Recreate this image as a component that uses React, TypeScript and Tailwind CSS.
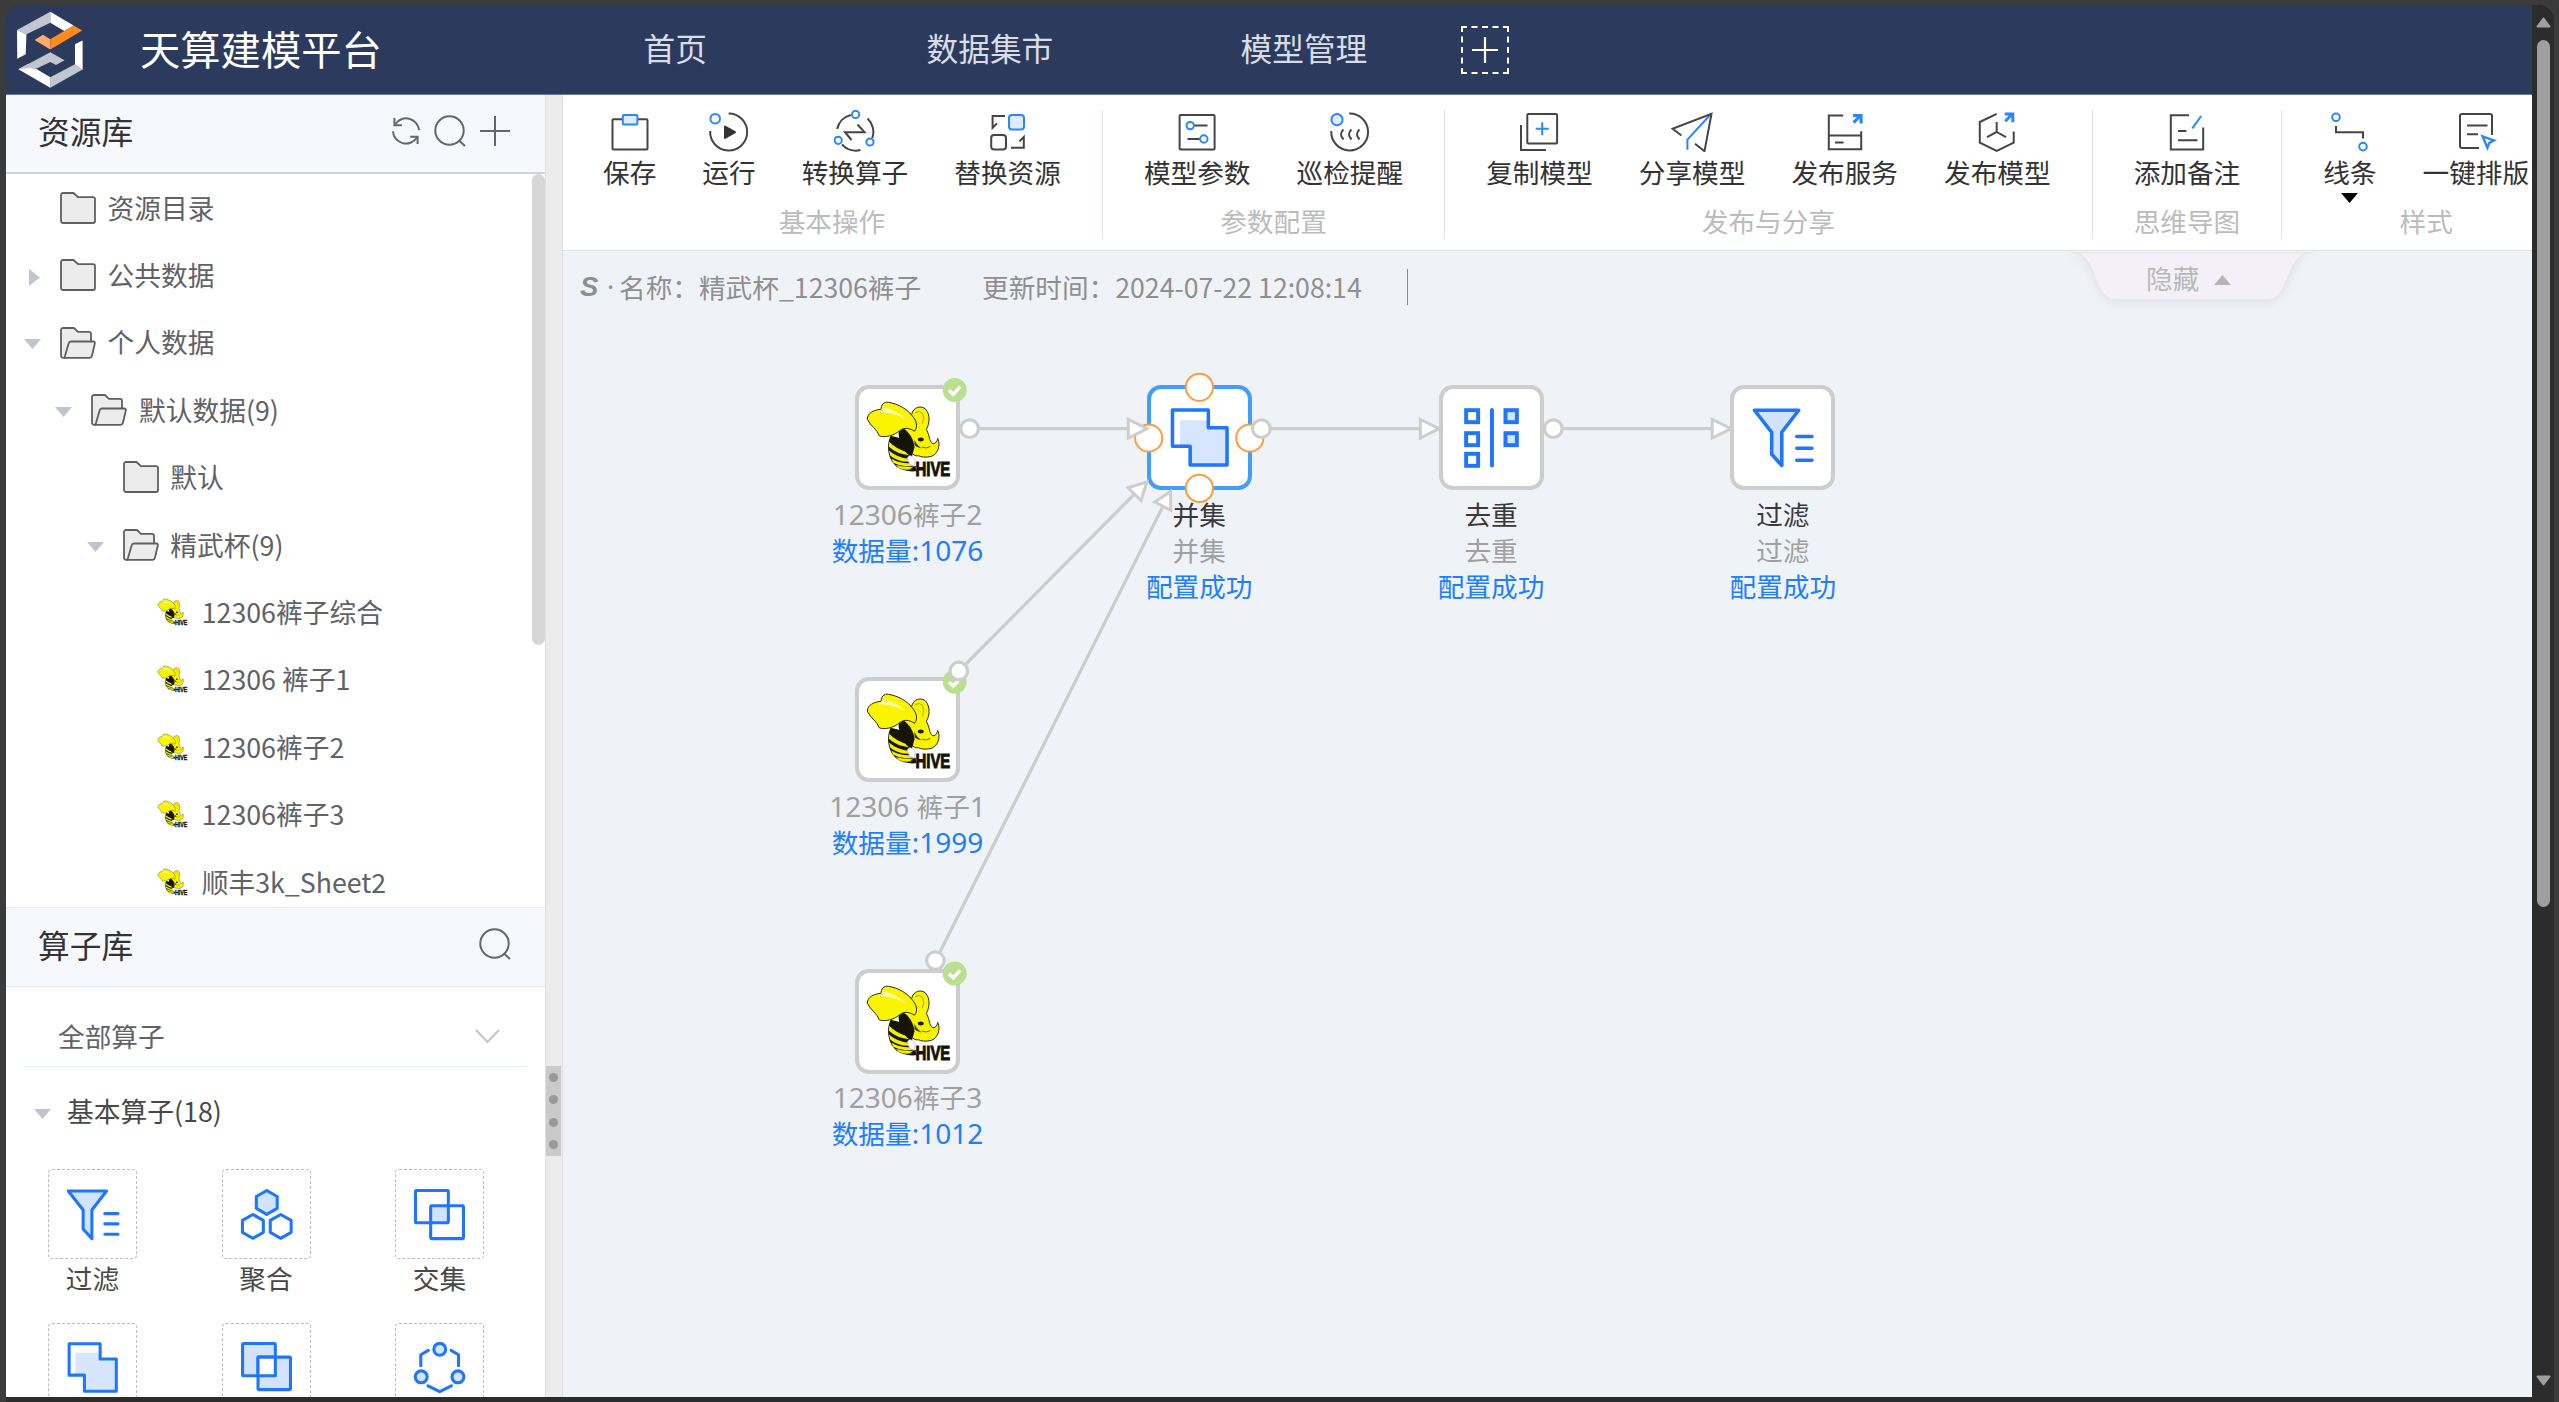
import React from 'react';

/* ---------- shared drawing pieces ---------- */

const DARK = '#454545';
const BLUE = '#2b85ff';
const PALE = '#dfebff';

function HiveIcon({ className }: { className?: string }) {
  return (
    <svg viewBox="135 120 262 235" overflow="visible" className={className}>
      {/* striped abdomen */}
      <path d="M212 228C196 262 206 312 242 328C262 336 280 336 292 334L270 300L262 240Z" fill="#151505" />
      <path d="M208 246q22 24 58 32l4 9q-40-4-63-26z" fill="#f4ee00" />
      <path d="M207 272q26 22 62 26l4 8q-38 2-62-18z" fill="#f4ee00" />
      <path d="M214 296q26 16 60 14l4 7q-30 8-58-8z" fill="#f4ee00" />
      <path d="M228 316q24 8 52 4l4 6q-22 8-46 0z" fill="#f4ee00" />
      {/* head and trunk */}
      <path
        d="M275 165C280 140 305 135 318 148C332 165 330 190 320 208L327 225C330 240 334 250 340 252C350 250 352 244 354 236C364 256 354 284 334 290C318 294 304 292 296 288C280 292 262 270 250 234L238 214Z"
        fill="#fbf400" stroke="#2a2a10" strokeWidth="3" strokeLinejoin="round"
      />
      <path d="M250 205C268 216 282 238 284 262L276 292C254 282 236 246 236 218Z" fill="#151505" />
      <path d="M284 240q8 18 22 26q-14-2-22-10z" fill="#3b3806" />
      {/* wings and ear */}
      <path
        d="M142 178C142 160 160 150 184 148C182 136 192 124 206 127C236 132 262 148 276 166C292 184 294 202 284 214C268 204 254 202 240 212C222 228 194 234 178 228C172 208 152 200 142 178Z"
        fill="#fbf400" stroke="#2a2a10" strokeWidth="3" strokeLinejoin="round"
      />
      <path d="M188 142q40 6 70 36q-40-24-80-20z" fill="#fdfaa8" />
      <path d="M286 158q14-8 22 2q8 14 0 32" fill="none" stroke="#a9a200" strokeWidth="3" />
      <ellipse cx="303" cy="239" rx="9" ry="6" fill="#1c1c08" />
      <path d="M306 262q14 6 26-2" fill="none" stroke="#6d6800" strokeWidth="3" />
      <path d="M262 296q4-12 16-6l8 10-2 20-14-6z" fill="#fff" stroke="#bbb" strokeWidth="2" />
      <path d="M272 326l16-8v16z" fill="#151505" />
      <text
        x="287" y="348" fontSize="62" fontWeight="700" fontFamily="'Liberation Sans', Arial, sans-serif"
        textLength="105" lengthAdjust="spacingAndGlyphs" fill="#131306" stroke="#131306" strokeWidth="3"
      >
        HIVE
      </text>
    </svg>
  );
}

type OpKind = 'filter' | 'aggregate' | 'intersect' | 'union' | 'difference' | 'ring' | 'dedupe';

const hexPath = (cx: number, cy: number) =>
  `M${cx} ${cy - 14}l12.3 7v14l-12.3 7l-12.3-7v-14z`;

function OpIcon({ kind, className }: { kind: OpKind; className?: string }) {
  return (
    <svg
      viewBox="0 0 60 60" className={className} overflow="visible"
      fill="none" stroke="#1f76fa" strokeWidth="3.6" strokeLinejoin="round" strokeLinecap="round"
    >
      {kind === 'filter' && (
        <>
          <path d="M1.5 2.3H46.5L29.3 24.7V58.5L19 47V24.7z" fill="#d2e3fd" />
          <path d="M44.5 29H60M44.5 41H60M44.5 53.2H60" />
        </>
      )}
      {kind === 'aggregate' && (
        <>
          <path d={hexPath(30.3, 15.8)} fill="#d2e3fd" />
          <path d={hexPath(14, 44)} />
          <path d={hexPath(46.7, 44)} />
        </>
      )}
      {kind === 'intersect' && (
        <>
          <path d="M19 19.5H40V40H19z" fill="#d2e3fd" stroke="none" />
          <rect x="1.8" y="1.8" width="38.6" height="38" rx="1" />
          <rect x="19.6" y="19.8" width="38.6" height="38.6" rx="1" />
        </>
      )}
      {kind === 'union' && (
        <>
          <path d="M10 12.5H39V21H57V58H20V39H10z" fill="#d6e6fe" stroke="none" />
          <path d="M2.5 2H39V20H58V58H20.5V39H2.5z" />
        </>
      )}
      {kind === 'difference' && (
        <>
          <rect x="1.8" y="1.8" width="38.6" height="38" rx="1" fill="#d2e3fd" />
          <rect x="20" y="17.8" width="38.2" height="38.2" rx="1" fill="#d2e3fd" />
          <path d="M20 17.8H40.4V39.8H20z" fill="#fff" />
        </>
      )}
      {kind === 'ring' && (
        <>
          <circle cx="30.3" cy="8.6" r="7" fill="#d2e3fd" />
          <circle cx="8.5" cy="41" r="7" fill="#d2e3fd" />
          <circle cx="51.7" cy="41" r="7" fill="#d2e3fd" />
          <path d="M16.8 9.8L8 15V28M43.6 9.8L52.4 15V28M16.5 51.5L30.3 58.5L44 51.5" />
        </>
      )}
      {kind === 'dedupe' && (
        <g strokeWidth="4" strokeLinejoin="miter">
          <rect x="4.2" y="2.2" width="12.2" height="12.2" />
          <rect x="4.2" y="25.6" width="12.2" height="12.2" />
          <rect x="4.2" y="46.6" width="12.2" height="12.2" />
          <path d="M30.5 2V58.5" />
          <rect x="44.2" y="2.2" width="11.6" height="12.2" fill="#d2e3fd" />
          <rect x="44.2" y="25.6" width="11.6" height="12.2" fill="#d2e3fd" />
        </g>
      )}
    </svg>
  );
}

/* ---------- header ---------- */

function Logo() {
  return (
    <svg viewBox="16 11 68 78" className="h-[78px] w-[68px]">
      <path d="M50.3 11.7L17 30L26.4 34.3L50.3 22.7z" fill="#c1c6d0" />
      <path d="M50.3 11.7L73.6 25.5L64.3 31L50.3 22.7z" fill="#fff" />
      <path d="M17 30L26.4 34.3L25.7 54.3L17.3 58.7z" fill="#fff" />
      <path d="M34.6 40L42.9 34.7L50.3 39.3V49.5z" fill="#ffab6b" />
      <path d="M50.3 49.5V39.3L73.6 25.5L82.2 30.5z" fill="#ff8b20" />
      <path d="M82.6 40.5V70L75 64.5V44.3z" fill="#fff" />
      <path d="M82.6 69.5L50.3 87.7V77.3L75 64.3z" fill="#c1c6d0" />
      <path d="M18.4 69.2L28 64L50.3 77.3V87.7z" fill="#fff" />
      <path d="M18.4 69.2L50.3 52.3L64.5 60.3L56 65L50.3 62L34.5 69.5L31 68z" fill="#c1c6d0" />
    </svg>
  );
}

function Header() {
  return (
    <header className="flex h-[90px] shrink-0 items-center border-b border-[#6f7a9a] bg-[#2c3b5d]">
      <div className="flex w-[134px] items-center pl-[10px]">
        <Logo />
      </div>
      <div className="-mt-[3px] w-[503.5px] text-[40.3px] leading-[84px] text-white">天算建模平台</div>
      <nav className="flex items-center text-[31.7px] leading-[84px] text-[#d9dde6]">
        <span className="-mt-[6px] w-[283px]">首页</span>
        <span className="-mt-[6px] w-[314px]">数据集市</span>
        <span className="-mt-[6px] w-[220.5px]">模型管理</span>
      </nav>
      <button className="flex size-[48px] items-center justify-center border-2 border-dashed border-white">
        <svg viewBox="0 0 28 28" className="size-7" stroke="#fff" strokeWidth="2.2">
          <path d="M14 1V27M1 14H27" />
        </svg>
      </button>
    </header>
  );
}

/* ---------- sidebar ---------- */

function SearchIcon() {
  return (
    <svg viewBox="0 0 32 32" className="size-8" fill="none" stroke="#666" strokeWidth="2">
      <circle cx="15.5" cy="15.5" r="14.2" />
      <path d="M25 25.5L31 31" />
    </svg>
  );
}

function RefreshIcon() {
  return (
    <svg viewBox="0 0 28 28" className="size-7" fill="none" stroke="#666" strokeWidth="2">
      <path d="M3.2 7.2A13 13 0 0 1 27 13.2" />
      <path d="M2.4 1V8.3H9.8" />
      <path d="M24.8 20.8A13 13 0 0 1 1 14.2" />
      <path d="M18.2 19.8H25.6V27" />
    </svg>
  );
}

function FolderClosed() {
  return (
    <svg viewBox="0 0 36 32" className="h-8 w-9" fill="#ececec" stroke="#5f5f5f" strokeWidth="1.8">
      <path d="M3 1H13.5L18 5.2H33a2 2 0 0 1 2 2V29a2 2 0 0 1-2 2H3a2 2 0 0 1-2-2V3a2 2 0 0 1 2-2z" />
    </svg>
  );
}

function FolderOpen() {
  return (
    <svg viewBox="0 0 36 32" className="mt-px h-8 w-9" fill="#ececec" stroke="#5f5f5f" strokeWidth="1.8" strokeLinejoin="round">
      <path d="M5 30.8H3a2 2 0 0 1-2-2V3a2 2 0 0 1 2-2H14L18 4.8H29a2 2 0 0 1 2 2V15" />
      <path d="M11 14.5H33.3q2 0 1.5 2L32 28.8q-.5 2-2.5 2H4.5L8.6 16.5q.5-2 2.4-2z" />
    </svg>
  );
}

function Caret({ open }: { open: boolean }) {
  return open ? (
    <svg viewBox="0 0 17 10" className="h-[10px] w-[17px]">
      <path d="M0 0H17L8.5 10z" fill="#c0c4cc" />
    </svg>
  ) : (
    <svg viewBox="0 0 11 17" className="ml-[5px] h-[17px] w-[11px]">
      <path d="M0 0L11 8.5L0 17z" fill="#c0c4cc" />
    </svg>
  );
}

type TreeNode = { label: string; depth: number; kind: 'closed' | 'open' | 'hive'; caret?: 'open' | 'shut' };

const tree: TreeNode[] = [
  { label: '资源目录', depth: 0, kind: 'closed' },
  { label: '公共数据', depth: 0, kind: 'closed', caret: 'shut' },
  { label: '个人数据', depth: 0, kind: 'open', caret: 'open' },
  { label: '默认数据(9)', depth: 1, kind: 'open', caret: 'open' },
  { label: '默认', depth: 2, kind: 'closed' },
  { label: '精武杯(9)', depth: 2, kind: 'open', caret: 'open' },
  { label: '12306裤子综合', depth: 3, kind: 'hive' },
  { label: '12306 裤子1', depth: 3, kind: 'hive' },
  { label: '12306裤子2', depth: 3, kind: 'hive' },
  { label: '12306裤子3', depth: 3, kind: 'hive' },
  { label: '顺丰3k_Sheet2', depth: 3, kind: 'hive' },
];

function TreeRow({ node }: { node: TreeNode }) {
  return (
    <li
      className="flex h-[67.4px] shrink-0 items-center text-[26.75px] whitespace-nowrap text-[#606266]"
      style={{ paddingLeft: node.depth * 31.4 }}
    >
      <span className="flex w-[54px] shrink-0 items-center pt-1 pl-[18px]">
        {node.caret && <Caret open={node.caret === 'open'} />}
      </span>
      {node.kind === 'closed' && <FolderClosed />}
      {node.kind === 'open' && <FolderOpen />}
      {node.kind === 'hive' && <HiveIcon className="ml-[3px] h-[28px] w-[31px]" />}
      <span className={node.kind === 'hive' ? 'ml-[13.5px]' : 'ml-[11.5px]'}>{node.label}</span>
    </li>
  );
}

const operators: { label: string; kind: OpKind }[] = [
  { label: '过滤', kind: 'filter' },
  { label: '聚合', kind: 'aggregate' },
  { label: '交集', kind: 'intersect' },
  { label: '并集', kind: 'union' },
  { label: '差集', kind: 'difference' },
  { label: '关联', kind: 'ring' },
];

function Sidebar() {
  return (
    <aside className="flex w-[539px] shrink-0 flex-col overflow-hidden bg-white">
      <div className="flex h-[79px] shrink-0 items-center border-b-2 border-[#cfd3dc] bg-[#f6f8fe] pr-[35px] pb-[5px] pl-[32px]">
        <h2 className="-mt-[2px] flex-1 text-[31.7px] leading-[60px] text-[#333]">资源库</h2>
        <div className="flex items-center">
          <RefreshIcon />
          <span className="ml-[14px]"><SearchIcon /></span>
          <svg viewBox="0 0 30 30" className="ml-[14px] size-[30px]" stroke="#666" strokeWidth="2">
            <path d="M15 0V30M0 15H30" />
          </svg>
        </div>
      </div>

      <div className="flex h-[733px] shrink-0 overflow-hidden">
        <ul className="flex flex-1 flex-col">
          {tree.map((n) => (
            <TreeRow key={n.label} node={n} />
          ))}
        </ul>
        <div className="h-[471px] w-[13.5px] rounded-full bg-[#d7d7d7]" />
      </div>

      <div className="flex h-[80px] shrink-0 items-center border-y-[1.5px] border-[#e6edf8] bg-[#f6f8fe] pr-[34px] pb-[6px] pl-[32px]">
        <h2 className="-mt-[1px] flex-1 text-[31.7px] leading-[60px] text-[#333]">算子库</h2>
        <SearchIcon />
      </div>

      <div className="mx-[18px] mt-[18px] flex h-[62px] shrink-0 items-center justify-between border-b-[1.5px] border-[#e1f0fd] pr-[27px] pl-[34px] text-[26.67px] text-[#606266]">
        <span>全部算子</span>
        <svg viewBox="0 0 25 14" className="h-[14px] w-[25px]" fill="none" stroke="#c0c4cc" strokeWidth="2">
          <path d="M1 1L12.5 13L24 1" />
        </svg>
      </div>

      <div className="mb-[13px] flex h-[89px] shrink-0 items-center pl-[27.5px] text-[26.75px] text-[#484848]">
        <span className="pt-1"><Caret open /></span>
        <span className="ml-[16.5px]">基本算子(18)</span>
      </div>

      <div className="grid shrink-0 grid-cols-[89px_89px_89px] gap-x-[84.5px] gap-y-[26.5px] pl-[42px]">
        {operators.map((op) => (
          <div key={op.kind} className="flex flex-col items-center">
            <div className="flex h-[90px] w-[89px] items-center justify-center rounded-[4px] border-[1.5px] border-dashed border-[#bdbdbd]">
              <OpIcon kind={op.kind} className="size-[51px]" />
            </div>
            <span className="text-[26.67px] leading-[37px] text-[#484848]">{op.label}</span>
          </div>
        ))}
      </div>
    </aside>
  );
}

function Splitter() {
  return (
    <div className="flex w-[18px] shrink-0 flex-col items-center border-x-[1.5px] border-x-[#dfe0e4] bg-[#ececec]">
      <div className="mt-[971px] -ml-px flex h-[90px] w-[15px] shrink-0 flex-col items-center justify-around bg-[#cacaca]">
        <i className="size-[9px] rounded-full bg-[#999]" />
        <i className="size-[9px] rounded-full bg-[#999]" />
        <i className="size-[9px] rounded-full bg-[#999]" />
        <i className="size-[9px] rounded-full bg-[#999]" />
      </div>
    </div>
  );
}

/* ---------- toolbar ---------- */

const arrowUpRight = (x: number, y: number) =>
  `M${x} ${y}L${x + 7.5} ${y - 7.5}M${x - 0.5} ${y - 7.2}H${x + 7.6}V${y + 1}`;

const icons: Record<string, React.ReactNode> = {
  save: (
    <>
      <rect x="3.5" y="9.3" width="35" height="30.2" rx="1" />
      <rect x="13.8" y="5" width="14.6" height="9.6" rx="1" stroke={BLUE} fill={PALE} />
    </>
  ),
  run: (
    <>
      <path d="M20.6 3.5A18.5 18.5 0 1 1 2.2 21" />
      <circle cx="7.2" cy="8.7" r="4.8" stroke={BLUE} />
      <path d="M17 16.5V28L27 22.2z" fill="#333" stroke="#333" strokeLinejoin="round" />
    </>
  ),
  convert: (
    <>
      <path d="M16.8 5A18.3 18.3 0 0 0 3.2 19M33.5 8.5A18.3 18.3 0 0 1 38.3 28M8 34.5A18.3 18.3 0 0 0 26.5 40" />
      <path d="M23.5 14.5L30.5 22.2H11L17.5 30" />
      <g stroke={BLUE} fill="#fff">
        <circle cx="21.6" cy="4.4" r="3.6" />
        <circle cx="4.2" cy="30.3" r="3.6" />
        <circle cx="36" cy="32" r="3.6" />
      </g>
    </>
  ),
  replace: (
    <>
      <rect x="22" y="5" width="15" height="14.6" rx="3" stroke={BLUE} fill={PALE} />
      <rect x="4.2" y="25" width="14.8" height="14.4" rx="3" />
      <path d="M18 6H5.6V17.8L10 13.4M24 37.8H36.8V27L32.4 31.4" />
    </>
  ),
  params: (
    <>
      <rect x="3.6" y="5" width="35" height="34.6" rx="1" />
      <path d="M18 15.5H31.5M11.5 29H24" />
      <circle cx="14.2" cy="15.6" r="3.7" stroke={BLUE} />
      <circle cx="27.8" cy="29" r="3.7" stroke={BLUE} />
    </>
  ),
  patrol: (
    <>
      <path d="M20.2 3.6A18.4 18.4 0 1 1 2.3 21" />
      <circle cx="8" cy="9.7" r="5.6" stroke={BLUE} fill={PALE} />
      <path d="M14.5 19.5Q9.5 24 14.5 29.5M22.5 19.5Q17.5 24 22.5 29.5M30.5 19.5Q25.5 24 30.5 29.5" />
    </>
  ),
  copy: (
    <>
      <rect x="9.3" y="4" width="29.8" height="29.5" rx="1" />
      <path d="M3 15V40H28" />
      <path d="M24.2 12.2V25.2M17.7 18.7H30.7" stroke={BLUE} />
    </>
  ),
  share: (
    <>
      <path d="M40 4L16.4 29.6V39.8" stroke={BLUE} />
      <path d="M10.5 25.5L1.5 18.7L40.5 3.8L33.5 41.2L24 33.8" />
    </>
  ),
  service: (
    <>
      <path d="M19.2 5.4H4.8V39.2H37.2V21.3M4.8 25.4H37.2M11 32.6H19.6" />
      <path d={arrowUpRight(29.5, 12.6)} stroke={BLUE} strokeWidth="3" />
    </>
  ),
  publish: (
    <>
      <path d="M20.7 3.8L3.8 12V32.6L20.7 40.8L37.7 32.6V21.6" />
      <path d="M20.7 12V22L11 27.2M20.7 22L30 27.2" />
      <path d={arrowUpRight(29.2, 11.2)} stroke={BLUE} strokeWidth="3" />
    </>
  ),
  note: (
    <>
      <path d="M23 5.2H4.8V39.4H37.2V17.6M12 21H20.5M12 30.2H31.5" />
      <path d="M35.2 6L26.3 18.4" stroke={BLUE} />
    </>
  ),
  line: (
    <>
      <path d="M7 16V22.3H34V28.5" />
      <circle cx="7" cy="7.3" r="3.8" stroke={BLUE} />
      <circle cx="34" cy="36.6" r="3.8" stroke={BLUE} />
    </>
  ),
  arrange: (
    <>
      <path d="M24 38H7a2 2 0 0 1-2-2V6a2 2 0 0 1 2-2H35a2 2 0 0 1 2 2V25M12 15.4H32.5M12 24.2H23" />
      <path d="M27.6 26.4L39 30.4L34.2 33L32.4 37.8z" stroke={BLUE} strokeWidth="2.4" />
    </>
  ),
};

const groups: { title: string; items: { icon: string; label: string; menu?: boolean }[] }[] = [
  {
    title: '基本操作',
    items: [
      { icon: 'save', label: '保存' },
      { icon: 'run', label: '运行' },
      { icon: 'convert', label: '转换算子' },
      { icon: 'replace', label: '替换资源' },
    ],
  },
  {
    title: '参数配置',
    items: [
      { icon: 'params', label: '模型参数' },
      { icon: 'patrol', label: '巡检提醒' },
    ],
  },
  {
    title: '发布与分享',
    items: [
      { icon: 'copy', label: '复制模型' },
      { icon: 'share', label: '分享模型' },
      { icon: 'service', label: '发布服务' },
      { icon: 'publish', label: '发布模型' },
    ],
  },
  { title: '思维导图', items: [{ icon: 'note', label: '添加备注' }] },
  {
    title: '样式',
    items: [
      { icon: 'line', label: '线条', menu: true },
      { icon: 'arrange', label: '一键排版' },
    ],
  },
];

function Toolbar() {
  return (
    <div className="flex h-[156px] shrink-0 border-b border-[#dfe3e8] bg-white pt-[15px]">
      {groups.map((g) => (
        <section
          key={g.title}
          className="flex h-[129px] shrink-0 flex-col items-center border-r-[1.5px] border-[#dde2eb] pr-[41px] pl-[41px] first:pl-[40px]"
        >
          <div className="flex gap-[46px]">
            {g.items.map((it) => (
              <div key={it.icon} className="flex flex-col items-center text-[26.67px] leading-10 text-[#333]">
                <svg viewBox="0 0 42 42" className="size-[42px]" fill="none" stroke={DARK} strokeWidth="2">
                  {icons[it.icon]}
                </svg>
                <span className="whitespace-nowrap">{it.label}</span>
                <span className="h-[11px]">
                  {it.menu && (
                    <svg viewBox="0 0 17 11" className="h-[11px] w-[17px]">
                      <path d="M0 1H17L8.5 11z" fill="#000" />
                    </svg>
                  )}
                </span>
              </div>
            ))}
          </div>
          <span className="text-[26.67px] leading-9 text-[#bcbcbc]">{g.title}</span>
        </section>
      ))}
    </div>
  );
}

/* ---------- canvas ---------- */

type FlowNode = {
  x: number;
  y: number;
  kind: OpKind | 'hive';
  selected?: boolean;
  name: [string, string];
  sub?: string;
  status: [string, string];
};

const flow: FlowNode[] = [
  { x: 855, y: 385, kind: 'hive', name: ['12306', '裤子|2'], status: ['数据量', ':1076'] },
  { x: 855, y: 677, kind: 'hive', name: ['12306 ', '裤子|1'], status: ['数据量', ':1999'] },
  { x: 855, y: 968.5, kind: 'hive', name: ['12306', '裤子|3'], status: ['数据量', ':1012'] },
  { x: 1146.7, y: 385, kind: 'union', selected: true, name: ['', '并集'], sub: '并集', status: ['配置成功', ''] },
  { x: 1438.6, y: 385, kind: 'dedupe', name: ['', '去重'], sub: '去重', status: ['配置成功', ''] },
  { x: 1730.3, y: 385, kind: 'filter', name: ['', '过滤'], sub: '过滤', status: ['配置成功', ''] },
];

/* canvas origin inside the window */
const OX = 563;
const OY = 252;

function Latin({ children }: { children: React.ReactNode }) {
  return <span className="font-['Noto_Sans'] text-[28px] leading-none whitespace-pre">{children}</span>;
}

function NodeBox({ node }: { node: FlowNode }) {
  return (
    <div
      className={
        node.selected
          ? 'absolute flex size-[105px] items-center justify-center rounded-[14px] border-4 border-[#409eff] bg-white'
          : 'absolute flex size-[105px] items-center justify-center rounded-[14px] border-4 border-[#cdcdcd] bg-white'
      }
      style={{ left: node.x - OX, top: node.y - OY }}
    >
      {node.kind === 'hive' ? (
        <HiveIcon className="mt-[3px] ml-[2px] h-[78px] w-[87px] shrink-0" />
      ) : (
        <OpIcon kind={node.kind} className="size-[59px]" />
      )}
    </div>
  );
}

function NodeText({ node }: { node: FlowNode }) {
  const [cjk, tail] = node.name[1].split('|');
  return (
    <div
      className="absolute flex w-[200px] flex-col items-center text-[26.67px] leading-9 whitespace-nowrap"
      style={{ left: node.x - OX - 47.5, top: node.y - OY + 110.5 }}
    >
      <span className={node.kind === 'hive' ? 'h-9 text-[#a0a0a0]' : 'h-9 text-[#3a3a3a]'}>
        {node.name[0] && <Latin>{node.name[0]}</Latin>}
        {cjk}
        {tail && <Latin>{tail}</Latin>}
      </span>
      {node.sub && <span className="h-9 text-[#a0a0a0]">{node.sub}</span>}
      <span className="h-9 text-[#1f7dff]">
        {node.status[0]}
        {node.status[1] && <Latin>{node.status[1]}</Latin>}
      </span>
    </div>
  );
}

function Edges() {
  const done = [390, 681.7, 973.5];
  return (
    <svg viewBox="563 252 1969 1146" className="pointer-events-none absolute inset-0 h-[1146px] w-[1969px]" fill="none">
      {done.map((y) => (
        <g key={y}>
          <circle cx="954.7" cy={y} r="12" fill="#b9df90" />
          <path d={`M949 ${y + 0.3}l4.3 4l7-7.6`} stroke="#fff" strokeWidth="3.4" />
        </g>
      ))}
      <g fill="#fff" stroke="#ff9b3a" strokeWidth="2">
        <circle cx="1199.4" cy="387.3" r="13.6" />
        <circle cx="1148.7" cy="438" r="13.6" />
        <circle cx="1249.8" cy="438" r="13.6" />
        <circle cx="1199.4" cy="488.4" r="13.6" />
      </g>
      <g stroke="#cdcdcd" strokeWidth="3.3">
        <path d="M970 428.7H1128M1261 428.7H1420M1553 428.7H1712" />
        <path d="M959 671L1133.5 495M935.5 961L1162.3 507.5" />
      </g>
      <g fill="#fff" stroke="#cdcdcd" strokeWidth="3">
        <path d="M1128.3 419.5V438L1147 428.7z" />
        <path d="M1420.3 419.5V438L1439 428.7z" />
        <path d="M1712.2 419.5V438L1731 428.7z" />
        <path d="M1128 487.8L1141 500.5L1146.8 482z" />
        <path d="M1154.8 502L1170.8 510.3L1170.5 491.5z" />
      </g>
      <g fill="#fff" stroke="#cdcdcd" strokeWidth="3.2">
        <circle cx="969.6" cy="428.7" r="8.8" />
        <circle cx="1261.4" cy="428.7" r="8.8" />
        <circle cx="1553.3" cy="428.7" r="8.8" />
        <circle cx="958.8" cy="671" r="8.8" />
        <circle cx="935.4" cy="960.6" r="8.8" />
      </g>
    </svg>
  );
}

function CollapseTab() {
  return (
    <div className="absolute top-0 left-[1500px] h-[70px] w-[260px]">
      <svg viewBox="2063 252 260 70" className="absolute inset-0 h-[70px] w-[260px] drop-shadow-[0_3px_4px_rgba(0,0,0,0.06)]">
        <path
          d="M2071 252.5C2098 252.5 2092 300 2115 300H2268C2291 300 2285 252.5 2313 252.5z"
          fill="#f3f1f7" stroke="#e5e6ec" strokeWidth="1.5"
        />
      </svg>
      <div className="relative flex h-[52px] items-center pl-[83px] text-[26.67px] text-[#b9b9b9]">
        <span>隐藏</span>
        <svg viewBox="0 0 17 10" className="mt-[3px] ml-[15px] h-[10px] w-[17px]">
          <path d="M8.5 0L17 10H0z" fill="#b5b5b5" />
        </svg>
      </div>
    </div>
  );
}

function Canvas() {
  return (
    <div className="relative mt-px flex-1 overflow-hidden bg-[#eff3f8]">
      <div className="flex h-[69px] items-center pl-[17px] text-[26.67px] whitespace-nowrap text-[#8f8f8f]">
        <span className="w-[27px] font-['Liberation_Sans'] text-[27.5px] font-bold italic">S</span>
        <span className="w-[12px] font-['Noto_Sans']">·</span>
        <span className="w-[363px]">名称：精武杯_12306裤子</span>
        <span className="w-[424.5px]">更新时间：2024-07-22 12:08:14</span>
        <span className="h-[36px] w-[1.5px] bg-[#888]" />
      </div>
      {flow.map((n) => (
        <NodeBox key={`${n.x}-${n.y}`} node={n} />
      ))}
      <Edges />
      {flow.map((n) => (
        <NodeText key={`${n.x}-${n.y}`} node={n} />
      ))}
      <CollapseTab />
    </div>
  );
}

/* ---------- window ---------- */

function PageScrollbar() {
  return (
    <div className="flex w-[22px] shrink-0 flex-col items-center bg-[#2c2c2c] pt-[12px] pb-[11px]">
      <svg viewBox="0 0 15 11" className="h-[11px] w-[15px]">
        <path d="M7.5 1.5L13.5 9.5H1.5z" fill="#9f9f9f" stroke="#9f9f9f" strokeWidth="2" strokeLinejoin="round" />
      </svg>
      <div className="mt-[12px] h-[867px] w-[13px] rounded-full bg-[#9f9f9f]" />
      <svg viewBox="0 0 15 11" className="mt-auto h-[11px] w-[15px]">
        <path d="M7.5 9.5L13.5 1.5H1.5z" fill="#9f9f9f" stroke="#9f9f9f" strokeWidth="2" strokeLinejoin="round" />
      </svg>
    </div>
  );
}

export default function App() {
  return (
    <div className="h-[1402px] w-[2559px] overflow-hidden bg-[#3b3b3b] pt-[5px] pl-[6px] font-['Noto_Sans_CJK_SC',sans-serif]">
      <div className="flex h-[1397px] w-[2548px] overflow-hidden rounded-t-[16px] bg-[#2c2c2c] pb-[5px]">
        <div className="flex w-[2526px] shrink-0 flex-col overflow-hidden">
          <Header />
          <div className="flex min-h-0 flex-1">
            <Sidebar />
            <Splitter />
            <main className="flex min-w-0 flex-1 flex-col overflow-hidden bg-[#eff3f8]">
              <Toolbar />
              <Canvas />
            </main>
          </div>
        </div>
        <PageScrollbar />
      </div>
    </div>
  );
}
